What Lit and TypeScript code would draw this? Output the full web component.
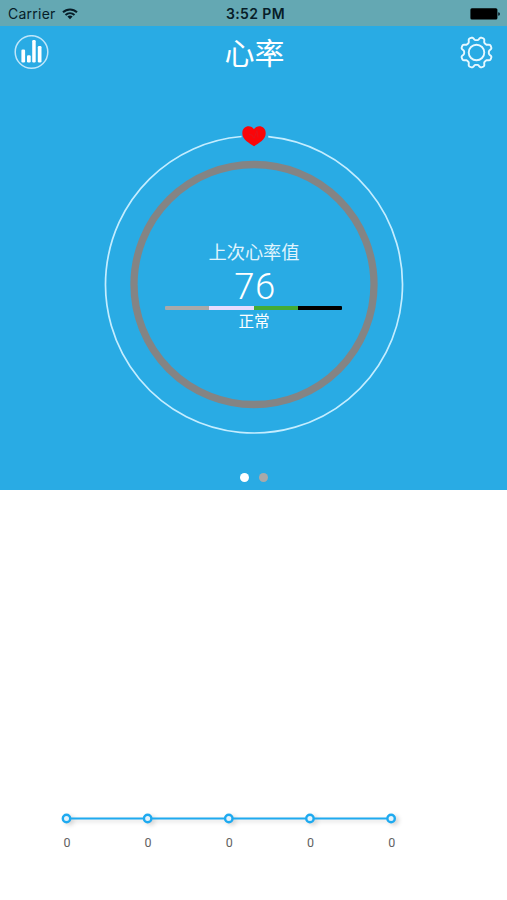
import { LitElement, html, svg, css } from "lit";
import { customElement, property } from "lit/decorators.js";

/** Closed outline of an eight-toothed cog centred on the origin. */
function cogPath(): string {
  const points: string[] = [];
  for (let i = 0; i < 192; i++) {
    const a = (i / 192) * Math.PI * 2;
    const r = 14 + 1.75 * Math.tanh(-1.9 * Math.cos(8 * a));
    points.push(`${(r * Math.cos(a)).toFixed(2)} ${(r * Math.sin(a)).toFixed(2)}`);
  }
  return `M${points.join("L")}Z`;
}

@customElement("status-bar")
class StatusBar extends LitElement {
  static styles = css`
    :host {
      display: grid;
      grid-template-columns: 1fr auto 1fr;
      align-items: center;
      height: 26px;
      padding: 1px 7px 0 8px;
      box-sizing: border-box;
      background: #64a8b3;
      color: #071d28;
      font: 14px/24px Inter, sans-serif;
    }
    .carrier { display: flex; align-items: center; gap: 6px; letter-spacing: 0.25px; }
    .time { font-weight: 600; font-size: 14px; letter-spacing: 0.4px; padding-left: 3px; }
    .battery { justify-self: end; }
    svg { display: block; }
  `;
  render() {
    return html`
      <div class="carrier">
        <span>Carrier</span>
        <svg width="16" height="12" viewBox="0 0 16 12" fill="none" stroke="#071d28" stroke-width="2">
          <path d="M1 4.3C5 .4 11 .4 15 4.3" />
          <path d="M3.5 7C6.200 4.500 9.800 4.500 12.500 7" />
          <path d="M5.400 8.500Q8 6.300 10.600 8.500L8 11.300Z" fill="#071d28" stroke="none" />
        </svg>
      </div>
      <div class="time">3:52 PM</div>
      <svg class="battery" width="30" height="12" viewBox="0 0 30 12">
        <rect x="0.400" y="0.300" width="27" height="11.200" rx="1.500" fill="#000" />
        <path d="M28.200 4.200Q30 4.500 30 6T28.200 7.800Z" fill="#071d28" />
      </svg>
    `;
  }
}

@customElement("nav-header")
class NavHeader extends LitElement {
  static styles = css`
    :host {
      display: grid;
      grid-template-columns: 36px 1fr 36px;
      align-items: center;
      height: 53px;
      padding: 0 12px 0 14px;
      color: #fff;
    }
    h1 {
      margin: 0;
      text-align: center;
      font: 400 30px/44px "Noto Sans CJK SC", sans-serif;
      padding-bottom: 3px;
    }
    svg { display: block; }
  `;
  render() {
    return html`
      <svg width="36" height="36" viewBox="0 0 36 36">
        <circle cx="17.500" cy="17" r="16.300" fill="none" stroke="#bfe6fa" stroke-width="1.500" />
        <g fill="#fff">
          <rect x="7.400" y="14.500" width="3.700" height="13" rx="1.200" />
          <rect x="13" y="20.300" width="3.700" height="7.200" rx="1.200" />
          <rect x="18.200" y="5.100" width="3.500" height="22.400" rx="1.200" />
          <rect x="23.800" y="11" width="3.700" height="16.500" rx="1.200" />
        </g>
      </svg>
      <h1>心率</h1>
      <svg width="36" height="36" viewBox="-17.500 -17.500 36 36" fill="none" stroke="#e6f8ff" stroke-width="1.900">
        <path d=${cogPath()} stroke-linejoin="round" />
        <circle r="7.800" />
      </svg>
    `;
  }
}

@customElement("heart-gauge")
class HeartGauge extends LitElement {
  @property({ type: Number }) value = 0;
  static styles = css`
    :host { display: grid; width: 300px; height: 312px; }
    svg, .reading { grid-area: 1 / 1; }
    svg { display: block; }
    .reading {
      display: flex;
      flex-direction: column;
      align-items: center;
      padding-top: 114.500px;
      color: #fff;
      font-family: "Noto Sans CJK SC", sans-serif;
      font-weight: 400;
    }
    .label { font-size: 18.2px; line-height: 26px; color: #e0f4fd; }
    .value { font: 300 36.500px/38px Roboto, sans-serif; padding: 4px 0 0 2px; letter-spacing: 0.5px; }
    .scale { display: flex; width: 177px; height: 4px; margin-right: 1px; border-radius: 1px; overflow: hidden; }
    .scale i { flex: 1; }
    .rest { background: #a9a9a9; }
    .low { background: #e6dcff; }
    .normal { background: #43ab35; }
    .high { background: #000; }
    .state { font-size: 15.600px; line-height: 20px; }
  `;
  render() {
    return html`
      <svg width="300" height="312" viewBox="0 0 300 312" fill="none">
        <circle cx="150" cy="161.500" r="148.500" stroke="#c4edff" stroke-width="1.700"
          pathLength="360" stroke-dasharray="349.700 10.300" transform="rotate(-84.500 150 161.500)" />
        <circle cx="150" cy="161.500" r="120" stroke="#848484" stroke-width="7.300" />
        <path fill="#fa0509" d="M150 23.200C145 20 138.300 16.400 138.300 10.200C138.300 2.600 147 1.400 150 6.300C153 1.400 161.700 2.600 161.700 10.200C161.700 16.400 155 20 150 23.200Z" />
        <path d="M145 11.500l3 .5 2 3.500 3-8 1 7" stroke="#d51f2a" stroke-width=".7" opacity=".8" />
      </svg>
      <div class="reading">
        <div class="label">上次心率值</div>
        <div class="value">${this.value}</div>
        <div class="scale"><i class="rest"></i><i class="low"></i><i class="normal"></i><i class="high"></i></div>
        <div class="state">正常</div>
      </div>
    `;
  }
}

@customElement("trend-chart")
class TrendChart extends LitElement {
  @property({ attribute: false }) values: number[] = [];
  static styles = css`
    :host { display: block; width: 406px; }
    svg { display: block; overflow: visible; }
    .line { filter: drop-shadow(3px 2px 2px rgba(0, 0, 0, 0.16)); }
    .labels { display: grid; grid-template-columns: repeat(5, 1fr); text-align: center; }
    .labels span { font: 12.500px/16px Roboto, sans-serif; color: #626262; }
  `;
  render() {
    const x = (i: number) => 40.5 + i * 81.15;
    return html`
      <svg width="406" height="27" viewBox="0 0 406 27">
        <g class="line">
          <path d="M40.500 10.500H365.100" stroke="#1eaaf0" stroke-width="2" />
          ${this.values.map((_, i) => svg`<circle cx=${x(i)} cy="10.500" r="3.700" fill="#e4f3fb" stroke="#1eaaf0" stroke-width="2.400" />`)}
        </g>
      </svg>
      <div class="labels">${this.values.map((v) => html`<span>${v}</span>`)}</div>
    `;
  }
}

@customElement("app-root")
class AppRoot extends LitElement {
  static styles = css`
    :host {
      display: flex;
      flex-direction: column;
      height: 900px;
      overflow: hidden;
      background: #fff;
    }
    .hero {
      display: flex;
      flex-direction: column;
      height: 489.500px;
      flex: none;
      background: #29abe4;
    }
    heart-gauge { align-self: center; margin: 44px 0 0 1px; }
    .pager { display: flex; justify-content: center; gap: 10.500px; margin: 38px 0 0 1px; }
    .dot { width: 9px; height: 9px; border-radius: 50%; background: #a9a9a9; }
    .dot.active { background: #fff; }
    trend-chart { margin: 318.500px 0 0 26.300px; }
  `;
  render() {
    return html`
      <section class="hero">
        <status-bar></status-bar>
        <nav-header></nav-header>
        <heart-gauge .value=${76}></heart-gauge>
        <div class="pager"><span class="dot active"></span><span class="dot"></span></div>
      </section>
      <trend-chart .values=${[0, 0, 0, 0, 0]}></trend-chart>
    `;
  }
}
